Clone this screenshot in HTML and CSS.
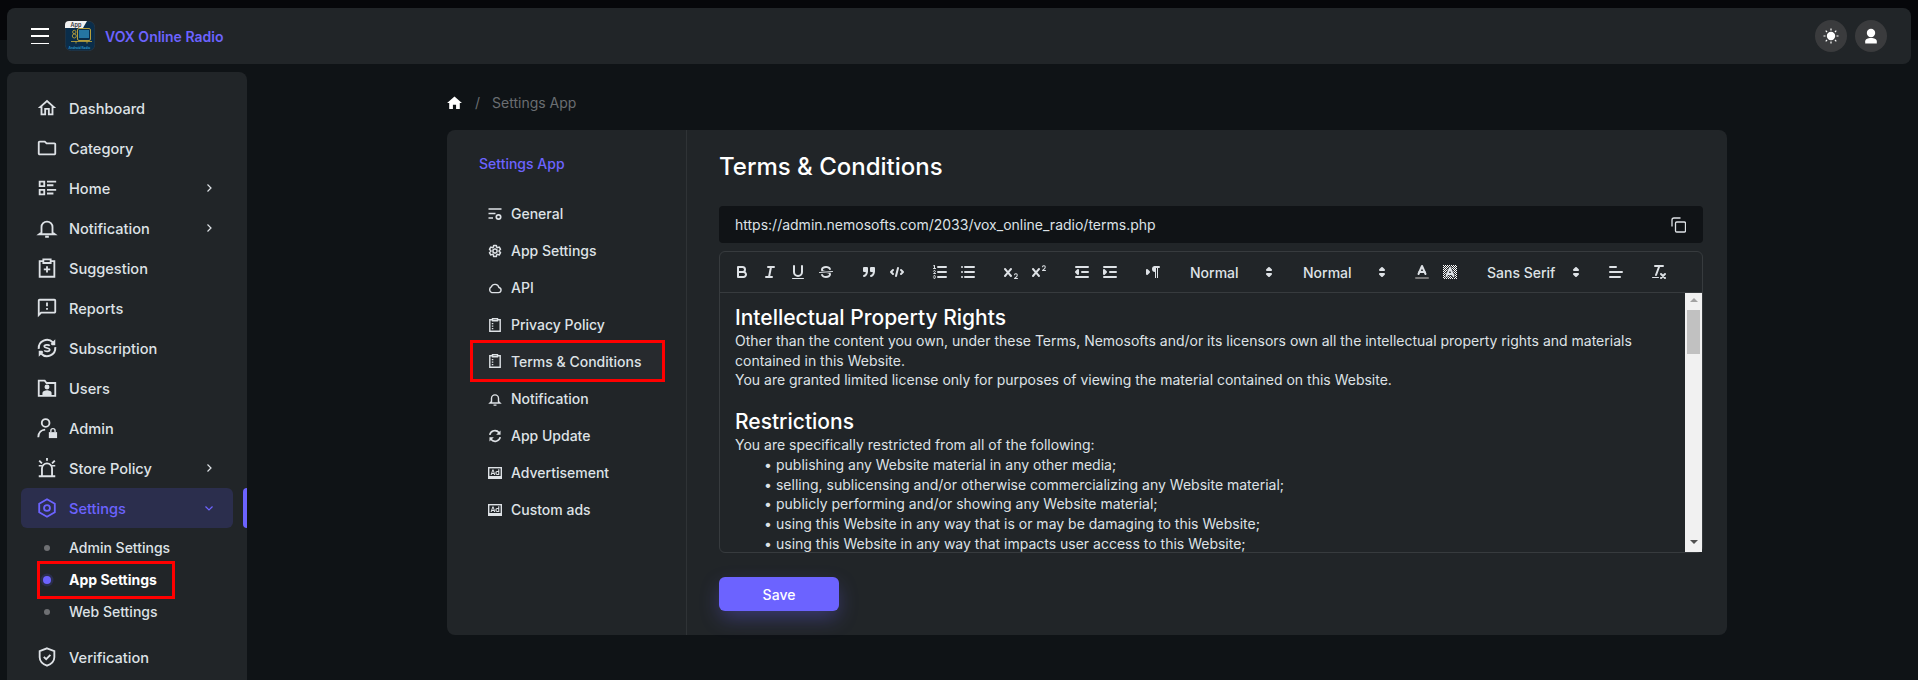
FILE: index.html
```html
<!DOCTYPE html>
<html lang="en">
<head>
    <meta charset="UTF-8">
    <meta name="viewport" content="width=device-width, initial-scale=1.0">
    <title>VOX Online Radio - Settings App</title>
    <link rel="stylesheet" href="styles.css">
</head>
<body>
    <svg class="defs" aria-hidden="true">
        <symbol id="i-chev" viewBox="0 0 12 12"><path d="M4.5 2.5 8 6 4.5 9.5" fill="none" stroke="currentColor" stroke-width="1.2"/></symbol>
        <symbol id="i-doc" viewBox="0 0 14 14"><path d="M4.5 1.800H1.800v11.500h10.400V1.800H9.500M4.5 .8h5v2h-5z" fill="none" stroke="currentColor" stroke-width="1.4"/><path d="M3.800 5h1.500v1.300H3.800zM3.800 7.500h1.500v1.300H3.800zM3.800 10h1.500v1.300H3.800z" fill="currentColor"/></symbol>
        <symbol id="i-ad" viewBox="0 0 14 14"><rect y="1" width="14" height="12" fill="currentColor"/><rect x="1.400" y="2.400" width="11.200" height="7.600" fill="#212528"/><path d="M2.600 9 4.400 3.400h1.100L7.300 9H6.100l-.3-1.100H4L3.700 9zM4.300 7h1.300l-.6-2.200zM11.300 3.200V9H9c-1 0-1.600-.8-1.600-1.900s.6-2 1.600-2h1.200V3.200zM10.200 6H9.200c-.5 0-.7.4-.7 1.100s.2 1 .7 1h1z" fill="currentColor"/></symbol>
        <symbol id="i-arrows" viewBox="0 0 18 18"><polygon points="7 11 9 13 11 11" fill="currentColor" stroke="currentColor" stroke-width="2" stroke-linejoin="round"/><polygon points="7 7 9 5 11 7" fill="currentColor" stroke="currentColor" stroke-width="2" stroke-linejoin="round"/></symbol>
    </svg>

    <div class="page">
        <header class="topbar">
            <button class="burger"><span></span><span></span><span></span></button>
            <svg class="logo" viewBox="0 0 30 30">
                <rect x=".25" y=".25" width="29.500" height="29.500" rx="6" fill="#0a2d4a" stroke="#34424e" stroke-width=".5"/>
                <path d="M0 7V4q0-4 4-4h18l-4 7z" fill="#f2f2f2"/>
                <text x="5.500" y="5.600" class="logo-app">App</text>
                <rect x="12.500" y="7.500" width="13" height="12" rx="1.500" fill="none" stroke="#c9ac3a" stroke-width=".9"/>
                <path d="M14 10h10M14 12h10M14 14h10M14 16h10" stroke="#2f8fc0" stroke-width="1.300"/>
                <circle cx="9.300" cy="11" r="1.700" fill="none" stroke="#c9ac3a" stroke-width=".8"/>
                <circle cx="9.300" cy="15" r="2" fill="none" stroke="#c9ac3a" stroke-width=".8"/>
                <path d="M6 20.500h21M11 20.500v2M22 20.500v2" stroke="#c9ac3a" stroke-width=".8"/>
                <text x="3.500" y="27.600" class="logo-sub">Android Radio</text>
            </svg>
            <span class="brand">VOX Online Radio</span>
            <div class="top-actions">
                <span class="round-btn">
                    <svg width="16" height="16" viewBox="0 0 16 16"><circle cx="8" cy="8" r="4.200" fill="#fff"/><path d="M8 .5v2M8 13.500v2M.5 8h2M13.500 8h2M2.700 2.700l1.400 1.400M11.900 11.900l1.400 1.400M2.700 13.300l1.400-1.400M11.900 4.100l1.400-1.400" stroke="#fff" stroke-width="1.200" fill="none"/></svg>
                </span>
                <span class="round-btn">
                    <svg width="14" height="16" viewBox="0 0 14 16"><circle cx="7" cy="5" r="4.200" fill="#fff"/><path d="M1.200 15.500v-2.200c0-2 2.400-3.300 5.800-3.300s5.800 1.300 5.800 3.300v2.200z" fill="#fff"/></svg>
                </span>
            </div>
        </header>

        <div class="main">
            <nav class="sidebar">
                <a class="nav-item"><svg class="nav-icon" viewBox="0 0 24 24"><path d="M12 5.690l5 4.500V18h-2v-6H9v6H7v-7.810l5-4.500M12 3L2 12h3v8h6v-6h2v6h6v-8h3L12 3z"/></svg>Dashboard</a>
                <a class="nav-item"><svg class="nav-icon" viewBox="0 0 24 24"><path d="M9.170 6l2 2H20v10H4V6h5.170M10 4H4c-1.100 0-1.990.9-1.990 2L2 18c0 1.100.9 2 2 2h16c1.100 0 2-.9 2-2V8c0-1.100-.9-2-2-2h-8l-2-2z"/></svg>Category</a>
                <a class="nav-item"><svg class="nav-icon" viewBox="0 0 24 24"><path d="M3 4h7v7H3zm2 2v3h3V6zM3 13h7v7H3zm2 2v3h3v-3zM12 4h10v2H12zM12 8h7v2h-7zM12 13h10v2H12zM12 17h7v2h-7z" fill-rule="evenodd"/></svg>Home<svg class="chev"><use href="#i-chev"/></svg></a>
                <a class="nav-item"><svg class="nav-icon" viewBox="0 0 24 24"><path d="M6 17v-6a6 6 0 0 1 12 0v6l2.500 1.800h-17zM10 21.500h4" fill="none" stroke="currentColor" stroke-width="2"/></svg>Notification<svg class="chev"><use href="#i-chev"/></svg></a>
                <a class="nav-item"><svg class="nav-icon" viewBox="0 0 24 24"><path d="M8 4.500H4v17h16v-17h-4M8 2.500h8v4H8zM12 10v7M8.500 13.500h7" fill="none" stroke="currentColor" stroke-width="2"/></svg>Suggestion</a>
                <a class="nav-item"><svg class="nav-icon" viewBox="0 0 24 24"><path d="M20 2H4c-1.100 0-1.990.9-1.990 2L2 22l4-4h14c1.100 0 2-.9 2-2V4c0-1.100-.9-2-2-2zm0 14H5.170L4 17.170V4h16v12zm-9-4h2v2h-2zm0-6h2v4h-2z"/></svg>Reports</a>
                <a class="nav-item"><svg class="nav-icon" viewBox="0 0 24 24"><path d="M3 13a9 9 0 0 1 15.500-7M21 11a9 9 0 0 1-15.500 7" fill="none" stroke="currentColor" stroke-width="2.200"/><path d="M21 2.500V9h-6.500zM3 21.500V15h6.500z"/><circle cx="12" cy="12" r="6" fill="#212528"/><path d="M15 9.500c-1-1.300-6-1.500-6 .7 0 2.400 6 1.300 6 3.800 0 2.200-5 2-6 .6" fill="none" stroke="currentColor" stroke-width="1.800"/></svg>Subscription</a>
                <a class="nav-item"><svg class="nav-icon" viewBox="0 0 24 24"><path d="M3 4h6.500l2 2.500H21V20.500H3z" fill="none" stroke="currentColor" stroke-width="2"/><circle cx="12" cy="11" r="2.700"/><path d="M7 19.500v-2c0-2 3-3 5-3s5 1 5 3v2z"/></svg>Users</a>
                <a class="nav-item"><svg class="nav-icon" viewBox="0 0 24 24"><circle cx="10.500" cy="6.500" r="4.200" fill="none" stroke="currentColor" stroke-width="2"/><path d="M2.500 22c0-5 3.500-8 7.500-8.300" fill="none" stroke="currentColor" stroke-width="2"/><path d="M14 16.500h9V23h-9z"/><path d="M16.200 16.500v-1.500a2.300 2.300 0 0 1 4.600 0v1.500" fill="none" stroke="currentColor" stroke-width="1.500"/></svg>Admin</a>
                <a class="nav-item"><svg class="nav-icon" viewBox="0 0 24 24"><path d="M6.500 20v-7.500a5.500 5.500 0 0 1 11 0V20M3 21h18M12 1v3M3.500 4l3 3M20.500 4l-3 3" fill="none" stroke="currentColor" stroke-width="2"/><path d="M3 9.500h3.500M17.500 9.500H21" fill="none" stroke="currentColor" stroke-width="1.500"/></svg>Store Policy<svg class="chev"><use href="#i-chev"/></svg></a>
                <a class="nav-item nav-open"><svg class="nav-icon" viewBox="0 0 24 24"><path d="M12 2.500 20.500 7.300v9.400L12 21.500 3.500 16.700V7.300z" fill="none" stroke="currentColor" stroke-width="2"/><circle cx="12" cy="12" r="3.200" fill="none" stroke="currentColor" stroke-width="2"/></svg>Settings<svg class="chev chev-down"><use href="#i-chev"/></svg></a>
                <div class="sub-list">
                    <a class="sub-item">Admin Settings</a>
                    <a class="sub-item sub-active">App Settings</a>
                    <a class="sub-item">Web Settings</a>
                </div>
                <a class="nav-item nav-last"><svg class="nav-icon" viewBox="0 0 24 24"><path d="M12 2.500 20 5.500v6.700c0 4.300-3.200 7.300-8 9.300-4.800-2-8-5-8-9.300V5.500z" fill="none" stroke="currentColor" stroke-width="2"/><path d="m8.500 11.800 2.600 2.600 4.600-4.800" fill="none" stroke="currentColor" stroke-width="2"/></svg>Verification</a>
            </nav>

            <main class="content">
                <div class="crumb">
                    <svg class="crumb-home" viewBox="0 0 16 14"><path d="M8 .5 0 7.500h2.300V14h4V9.500h3.400V14h4V7.500H16z"/></svg>
                    <span class="crumb-sep">/</span>
                    <span>Settings App</span>
                </div>

                <section class="card">
                    <aside class="card-side">
                        <div class="side-title">Settings App</div>
                        <a class="side-item"><svg viewBox="0 0 14 14"><path d="M.5 2h13M.5 6.500h7M.5 11h4.500" fill="none" stroke="currentColor" stroke-width="1.400"/><circle cx="10.500" cy="10" r="2.200" fill="none" stroke="currentColor" stroke-width="1.700"/></svg>General</a>
                        <a class="side-item"><svg viewBox="0 0 24 24"><path d="M19.140 12.940c.04-.3.060-.61.060-.94 0-.32-.020-.64-.070-.94l2.030-1.580a.49.490 0 0 0 .120-.61l-1.920-3.320a.49.490 0 0 0-.590-.22l-2.390.96c-.5-.38-1.030-.7-1.620-.94l-.36-2.540a.48.480 0 0 0-.48-.41h-3.840a.47.470 0 0 0-.47.410l-.36 2.540c-.59.240-1.130.570-1.620.94l-2.390-.96a.49.490 0 0 0-.590.220L2.740 8.870a.47.470 0 0 0 .120.610l2.030 1.580c-.05.3-.09.630-.09.940s.020.640.070.940l-2.030 1.580a.49.490 0 0 0-.120.610l1.920 3.320c.120.220.37.290.59.220l2.390-.96c.5.380 1.030.7 1.620.94l.36 2.540c.05.240.24.410.48.410h3.840c.24 0 .44-.17.47-.41l.36-2.540c.59-.24 1.130-.56 1.620-.94l2.390.96c.22.080.47 0 .59-.22l1.920-3.320a.47.470 0 0 0-.12-.61zM12 15.600A3.600 3.600 0 1 1 12 8.400a3.600 3.600 0 0 1 0 7.200z" fill="none" stroke="currentColor" stroke-width="2.600"/></svg>App Settings</a>
                        <a class="side-item"><svg viewBox="0 0 24 24"><path d="M6.500 20h11.500a4.500 4.500 0 0 0 .8-8.900 7 7 0 0 0-13.300-1A5.500 5.500 0 0 0 6.500 20z" fill="none" stroke="currentColor" stroke-width="2.400"/></svg>API</a>
                        <a class="side-item"><svg><use href="#i-doc"/></svg>Privacy Policy</a>
                        <a class="side-item side-active"><svg><use href="#i-doc"/></svg>Terms &amp; Conditions</a>
                        <a class="side-item"><svg viewBox="0 0 24 24"><path d="M6 16.500v-5.500a6 6 0 0 1 12 0v5.500l2.500 2.300h-17zM9.500 22.500h5" fill="none" stroke="currentColor" stroke-width="2.400"/></svg>Notification</a>
                        <a class="side-item"><svg viewBox="0 0 24 24"><path d="M3 10a9 9 0 0 1 16-3.500M21 14a9 9 0 0 1-16 3.500" fill="none" stroke="currentColor" stroke-width="2.800"/><path d="M21.500 2.500V10H14zM2.500 21.500V14H10z"/></svg>App Update</a>
                        <a class="side-item"><svg><use href="#i-ad"/></svg>Advertisement</a>
                        <a class="side-item"><svg><use href="#i-ad"/></svg>Custom ads</a>
                    </aside>

                    <div class="card-main">
                        <h1 class="page-title">Terms &amp; Conditions</h1>
                        <div class="url-bar">
                            <span>https://admin.nemosofts.com/2033/vox_online_radio/terms.php</span>
                            <svg width="15" height="16" viewBox="0 0 15 16" fill="none" stroke="currentColor" stroke-width="1.300"><rect x="4.500" y="5" width="10" height="10" rx="1.200"/><path d="M9.500 1H3a2 2 0 0 0-2 2v6.500"/></svg>
                        </div>

                        <div class="editor">
                            <div class="toolbar">
                                <span class="tb-group">
                                    <svg class="tb" viewBox="0 0 18 18"><path class="s" d="M5,4H9.500A2.500,2.500,0,0,1,12,6.500v0A2.500,2.500,0,0,1,9.500,9H5V4Z"/><path class="s" d="M5,9h5.500A2.500,2.500,0,0,1,13,11.500v0A2.500,2.500,0,0,1,10.500,14H5V9Z"/></svg>
                                    <svg class="tb" viewBox="0 0 18 18"><path class="s" d="M7 4h6M5 14h6M8 14l2-10"/></svg>
                                    <svg class="tb" viewBox="0 0 18 18"><path class="s" d="M5,3V9a4.012,4.012,0,0,0,4,4H9a4.012,4.012,0,0,0,4-4V3"/><rect class="f" height="1" rx=".5" ry=".5" width="12" x="3" y="15"/></svg>
                                    <svg class="tb" viewBox="0 0 18 18"><line class="t" x1="15.500" x2="2.500" y1="8.500" y2="9.500"/><path class="f" d="M9.007,8C6.542,7.791,6,7.519,6,6.500,6,5.792,7.283,5,9,5c1.571,0,2.765.679,2.969,1.309a1,1,0,0,0,1.900-.617C13.356,4.106,11.354,3,9,3,6.200,3,4,4.538,4,6.500a3.200,3.200,0,0,0,.5,1.843Z"/><path class="f" d="M8.984,10C11.457,10.208,12,10.479,12,11.500c0,.708-1.283,1.500-3,1.500-1.571,0-2.765-.679-2.969-1.309a1,1,0,1,0-1.900.617C4.644,13.894,6.646,15,9,15c2.800,0,5-1.538,5-3.500a3.200,3.200,0,0,0-.5-1.843Z"/></svg>
                                </span>
                                <span class="tb-group">
                                    <svg class="tb" viewBox="0 0 18 18"><rect class="f s" height="3" width="3" x="4" y="5"/><rect class="f s" height="3" width="3" x="11" y="5"/><path class="s" d="M7,8c0,4.031-3,5-3,5"/><path class="s" d="M14,8c0,4.031-3,5-3,5"/></svg>
                                    <svg class="tb" viewBox="0 0 18 18"><polyline class="s" points="5 7 3 9 5 11"/><polyline class="s" points="13 7 15 9 13 11"/><line class="s" x1="10" x2="8" y1="5" y2="13"/></svg>
                                </span>
                                <span class="tb-group">
                                    <svg class="tb" viewBox="0 0 18 18"><path class="s" d="M7 4h8M7 9h8M7 14h8"/><line class="t" x1="2.500" x2="4.500" y1="5.500" y2="5.500"/><path class="f" d="M3.500,6A0.500,0.500,0,0,1,3,5.500V3.085l-0.276.138A0.500,0.500,0,0,1,2.053,3c-0.124-.247-0.023-0.324.224-0.447l1-.5A0.500,0.500,0,0,1,4,2.500v3A0.500,0.500,0,0,1,3.500,6Z"/><path class="t" d="M4.500,10.500h-2c0-.234,1.850-1.076,1.850-2.234A0.959,0.959,0,0,0,2.500,8.156"/><path class="t" d="M2.500,14.846a0.959,0.959,0,0,0,1.850-.109A0.700,0.700,0,0,0,3.750,14a0.688,0.688,0,0,0,.6-0.736,0.959,0.959,0,0,0-1.850-.109"/></svg>
                                    <svg class="tb" viewBox="0 0 18 18"><path class="s" d="M6 4h9M6 9h9M6 14h9M3 4h.01M3 9h.01M3 14h.01"/></svg>
                                </span>
                                <span class="tb-group">
                                    <svg class="tb" viewBox="0 0 18 18"><path class="f" d="M15.500,15H13.861a3.858,3.858,0,0,0,1.914-2.975,1.800,1.800,0,0,0-1.600-1.751A1.921,1.921,0,0,0,12.021,11.700a0.500,0.500,0,1,0,.957.291,0.914,0.914,0,0,1,1.053-.725,0.810,0.810,0,0,1,.744.762c0,1.076-1.170,1.870-1.940,2.431A1.456,1.456,0,0,0,12,15.500a0.500,0.500,0,0,0,.5.500h3A0.500,0.500,0,0,0,15.500,15Z"/><path class="f" d="M9.651,5.241a1,1,0,0,0-1.410.108L6,7.964,3.759,5.349a1,1,0,1,0-1.519,1.300L4.683,9.500,2.241,12.350a1,1,0,1,0,1.519,1.300L6,11.036l2.241,2.616a1,1,0,0,0,1.519-1.300L7.317,9.500,9.759,6.651A1,1,0,0,0,9.651,5.241Z"/></svg>
                                    <svg class="tb" viewBox="0 0 18 18"><path class="f" d="M15.500,7H13.861a4.015,4.015,0,0,0,1.914-2.975,1.800,1.800,0,0,0-1.600-1.751A1.922,1.922,0,0,0,12.021,3.700a0.500,0.500,0,1,0,.957.291,0.917,0.917,0,0,1,1.053-.725,0.810,0.810,0,0,1,.744.762c0,1.077-1.164,1.925-1.934,2.486A1.423,1.423,0,0,0,12,7.500a0.500,0.500,0,0,0,.5.500h3A0.500,0.500,0,0,0,15.500,7Z"/><path class="f" d="M9.651,5.241a1,1,0,0,0-1.410.108L6,7.964,3.759,5.349a1,1,0,1,0-1.519,1.300L4.683,9.500,2.241,12.350a1,1,0,1,0,1.519,1.300L6,11.036l2.241,2.616a1,1,0,0,0,1.519-1.300L7.317,9.500,9.759,6.651A1,1,0,0,0,9.651,5.241Z"/></svg>
                                </span>
                                <span class="tb-group">
                                    <svg class="tb" viewBox="0 0 18 18"><path class="s" d="M3 14h12M3 4h12M9 9h6"/><polygon class="f s" points="5 7 5 11 3 9 5 7"/></svg>
                                    <svg class="tb" viewBox="0 0 18 18"><path class="s" d="M3 14h12M3 4h12M9 9h6"/><polygon class="f s" points="3 7 3 11 5 9 3 7"/></svg>
                                </span>
                                <span class="tb-group">
                                    <svg class="tb" viewBox="0 0 18 18"><polygon class="f s" points="3 11 5 9 3 7 3 11"/><line class="s" x1="15" x2="11" y1="4" y2="4"/><path class="f" d="M11,3a3,3,0,0,0,0,6h1V3H11Z"/><rect class="f" height="11" width="1" x="11" y="4"/><rect class="f" height="11" width="1" x="13" y="4"/></svg>
                                </span>
                                <span class="picker tb-group">Normal<svg><use href="#i-arrows"/></svg></span>
                                <span class="picker tb-group">Normal<svg><use href="#i-arrows"/></svg></span>
                                <span class="tb-group">
                                    <svg class="tb" viewBox="0 0 18 18"><line class="s grey" x1="3" x2="15" y1="15" y2="15"/><polyline class="s" points="5.500 11 9 3 12.500 11"/><line class="s" x1="11.630" x2="6.380" y1="9" y2="9"/></svg>
                                    <svg class="tb" viewBox="0 0 18 18"><defs><pattern id="dither" width="2" height="2" patternUnits="userSpaceOnUse"><rect width="1" height="1" fill="#fff"/><rect x="1" y="1" width="1" height="1" fill="#fff"/></pattern></defs><rect x="2" y="2" width="14" height="14" fill="url(#dither)"/><path class="halo" d="M5.500 13 9 5l3.500 8M11.630 11H6.380"/><polyline class="s" points="5.500 13 9 5 12.500 13"/><line class="s" x1="11.630" x2="6.380" y1="11" y2="11"/></svg>
                                </span>
                                <span class="picker picker-wide tb-group">Sans Serif<svg><use href="#i-arrows"/></svg></span>
                                <span class="tb-group">
                                    <svg class="tb" viewBox="0 0 18 18"><path class="s" d="M3 9h12M3 14h10M3 4h6"/></svg>
                                </span>
                                <span class="tb-group">
                                    <svg class="tb" viewBox="0 0 18 18"><path class="s" d="M5 3h8M6 12 9.350 3M11 11l4 4M15 11l-4 4"/><rect class="f" height="1" rx=".5" ry=".5" width="7" x="2" y="14"/></svg>
                                </span>
                            </div>
                            <div class="editor-body">
                                <div class="editor-text">
                                    <h2>Intellectual Property Rights</h2>
                                    <p>Other than the content you own, under these Terms, Nemosofts and/or its licensors own all the intellectual property rights and materials contained in this Website.</p>
                                    <p>You are granted limited license only for purposes of viewing the material contained on this Website.</p>
                                    <h2 class="next">Restrictions</h2>
                                    <p>You are specifically restricted from all of the following:</p>
                                    <ul>
                                        <li>publishing any Website material in any other media;</li>
                                        <li>selling, sublicensing and/or otherwise commercializing any Website material;</li>
                                        <li>publicly performing and/or showing any Website material;</li>
                                        <li>using this Website in any way that is or may be damaging to this Website;</li>
                                        <li>using this Website in any way that impacts user access to this Website;</li>
                                    </ul>
                                </div>
                                <div class="scrollbar">
                                    <span class="arrow-up"></span>
                                    <span class="thumb"></span>
                                    <span class="arrow-down"></span>
                                </div>
                            </div>
                        </div>

                        <button class="save-btn">Save</button>
                    </div>
                </section>
            </main>
        </div>
    </div>
</body>
</html>
```

FILE: styles.css
```css
* {
    box-sizing: border-box;
}

html, body {
    margin: 0;
    height: 680px;
    overflow: hidden;
}

body {
    font-family: Inter, "Liberation Sans", sans-serif;
    font-size: 14px;
    color: #dee2e6;
    background: linear-gradient(#06070a 40px, #0f1316 40px);
}

.defs {
    display: none;
}

.page {
    padding: 8px 7px 0;
}

/* top bar */
.topbar {
    display: flex;
    align-items: center;
    height: 56px;
    padding: 0 24px;
    background-color: #212528;
    border-radius: 8px;
}

.burger {
    display: flex;
    flex-direction: column;
    justify-content: space-between;
    width: 18px;
    height: 16px;
    padding: 0;
    margin-right: 16px;
    border: none;
    background: none;
}

.burger span {
    height: 1.5px;
    background-color: #fff;
}

.logo {
    width: 30px;
    height: 30px;
    margin-right: 10px;
}

.logo-app {
    font-size: 5.5px;
    font-weight: 600;
    fill: #333;
}

.logo-sub {
    font-size: 3.2px;
    font-weight: 600;
    fill: #2f9fd0;
}

.brand {
    font-size: 14px;
    font-weight: 600;
    color: #6c63ff;
}

.top-actions {
    display: flex;
    gap: 8px;
    margin-left: auto;
}

.round-btn {
    display: flex;
    align-items: center;
    justify-content: center;
    width: 32px;
    height: 32px;
    border-radius: 50%;
    background-color: #3a3b3d;
}

.main {
    display: flex;
}

/* sidebar */
.sidebar {
    flex: none;
    width: 240px;
    height: 620px;
    margin-top: 8px;
    padding: 16px 14px 0;
    background-color: #212528;
    border-radius: 8px 8px 0 0;
}

.nav-item {
    position: relative;
    display: flex;
    align-items: center;
    height: 40px;
    padding: 2px 0 0 15px;
    font-size: 14.6px;
    font-weight: 500;
    border-radius: 6px;
}

.nav-icon {
    flex: none;
    width: 22px;
    height: 22px;
    margin: -2px 11px 0 0;
    fill: currentColor;
}

.chev {
    width: 12px;
    height: 12px;
    margin: -2px 18px 0 auto;
}

.chev-down {
    transform: rotate(90deg);
}

.nav-open {
    color: #6c63ff;
    background-color: #2b2e4d;
}

.nav-open::after {
    content: "";
    position: absolute;
    top: 0;
    right: -14px;
    width: 4px;
    height: 40px;
    background-color: #6c63ff;
    border-radius: 4px 0 0 4px;
}

.sub-list {
    padding-top: 4px;
}

.sub-item {
    position: relative;
    display: flex;
    align-items: center;
    width: 132px;
    height: 32px;
    margin-left: 19px;
    padding: 0 0 2px 29px;
    font-weight: 500;
}

.sub-item::before {
    content: "";
    position: absolute;
    left: 4px;
    top: 13px;
    width: 6px;
    height: 6px;
    border-radius: 50%;
    background-color: #6e7073;
}

.sub-active {
    font-weight: 700;
    color: #fff;
    outline: 3px solid #f00;
}

.sub-active::before {
    left: 3px;
    top: 12px;
    width: 8px;
    height: 8px;
    background-color: #6c63ff;
    box-shadow: 0 0 0 2.5px #2b2e4d;
}

.nav-last {
    margin-top: 9px;
}

/* page content */
.content {
    flex: none;
    width: 1280px;
    margin-left: 200px;
}

.crumb {
    display: flex;
    align-items: center;
    height: 66px;
    padding-top: 11px;
    color: #6a6e72;
}

.crumb-home {
    width: 15px;
    height: 13px;
    fill: #fff;
}

.crumb-sep {
    margin: 0 12px 0 13px;
}

.card {
    display: flex;
    height: 505px;
    background-color: #212528;
    border-radius: 8px;
}

.card-side {
    flex: none;
    width: 240px;
    padding: 24px 24px 0 26px;
    border-right: 1px solid #2f3336;
}

.side-title {
    height: 20px;
    margin: 0 0 21px 6px;
    line-height: 20px;
    font-weight: 500;
    color: #6c63ff;
}

.side-item {
    display: flex;
    align-items: center;
    height: 37px;
    padding-left: 15px;
    font-weight: 500;
}

.side-item svg {
    flex: none;
    width: 14px;
    height: 14px;
    margin-right: 9px;
    fill: currentColor;
}

.side-active {
    height: 36px;
    margin-bottom: 1px;
    background-color: #272a2e;
    outline: 3px solid #f00;
}

.card-main {
    flex: 1;
    padding: 22px 24px 0 32px;
}

.page-title {
    margin: 0 0 24px;
    height: 30px;
    line-height: 30px;
    font-size: 24px;
    font-weight: 500;
    color: #fff;
}

.url-bar {
    display: flex;
    align-items: center;
    justify-content: space-between;
    height: 37px;
    padding: 0 17px 0 16px;
    background-color: #101316;
    border-radius: 4px;
}

/* quill style editor */
.editor {
    height: 302px;
    margin-top: 8px;
    border: 1px solid #373b3e;
    border-radius: 6px;
}

.toolbar {
    display: flex;
    align-items: center;
    height: 41px;
    padding-left: 8px;
    border-bottom: 1px solid #373b3e;
}

.tb-group {
    display: flex;
    flex: none;
    margin-right: 15px;
}

.tb {
    width: 28px;
    height: 24px;
    padding: 3px 5px;
}

.tb .s, .tb .t, .tb .halo {
    fill: none;
    stroke: #dee2e6;
    stroke-width: 2;
    stroke-linecap: round;
    stroke-linejoin: round;
}

.tb .t {
    stroke-width: 1;
}

.tb .halo {
    stroke: #212528;
    stroke-width: 3.2;
}

.tb .f {
    fill: #dee2e6;
}

.tb .grey {
    stroke: #777;
}

.picker {
    position: relative;
    align-items: center;
    justify-content: space-between;
    width: 98px;
    height: 24px;
    padding-left: 8px;
    font-weight: 500;
}

.picker-wide {
    width: 108px;
}

.picker svg {
    width: 18px;
    height: 18px;
    margin-right: 2px;
}

.editor-body {
    display: flex;
    height: 259px;
}

.editor-text {
    flex: 1;
    min-width: 0;
    padding: 12px 20px 0 15px;
    overflow: hidden;
    line-height: 19.5px;
}

.editor-text h2 {
    margin: 0;
    line-height: 26px;
    font-size: 21px;
    font-weight: 500;
    color: #fff;
}

.editor-text h2.next {
    margin-top: 19px;
}

.editor-text p {
    margin: 0;
}

.editor-text ul {
    margin: 0;
    padding: 1px 0 0 41px;
    line-height: 19.7px;
    list-style: none;
}

.editor-text li::before {
    content: "\2022";
    display: inline-block;
    width: 1.2em;
    margin-left: -1.5em;
    margin-right: .3em;
    text-align: right;
}

.scrollbar {
    display: flex;
    flex: none;
    flex-direction: column;
    align-items: center;
    width: 17px;
    background-color: #f1f1f1;
}

.arrow-up, .arrow-down {
    width: 0;
    height: 0;
    border-left: 4px solid transparent;
    border-right: 4px solid transparent;
}

.arrow-up {
    margin-top: 5px;
    border-bottom: 4px solid #a3a3a3;
}

.arrow-down {
    margin-top: auto;
    margin-bottom: 8px;
    border-top: 4px solid #505050;
}

.thumb {
    width: 13px;
    height: 44px;
    margin-top: 8px;
    background-color: #c1c1c1;
}

.save-btn {
    display: block;
    width: 120px;
    height: 34px;
    margin-top: 24px;
    font-family: inherit;
    font-size: 14px;
    font-weight: 500;
    color: #fff;
    background-color: #6c63ff;
    border: none;
    border-radius: 6px;
    box-shadow: 0 8px 20px -2px rgba(108, 99, 255, .35);
}
```
